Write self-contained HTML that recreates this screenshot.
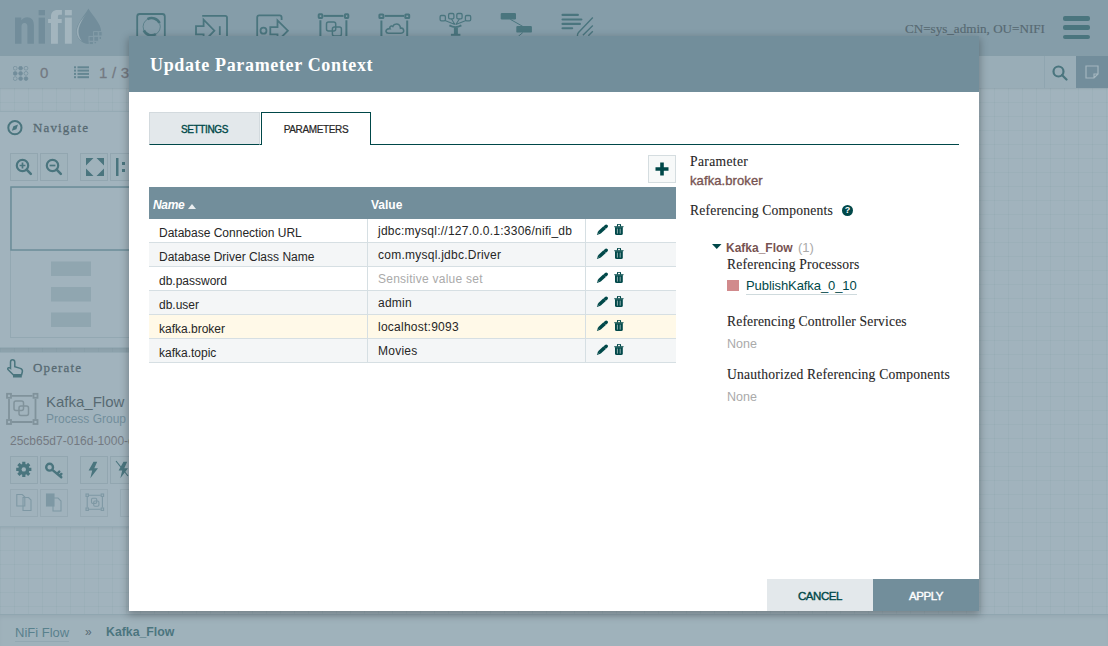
<!DOCTYPE html>
<html><head><meta charset="utf-8">
<style>
*{box-sizing:border-box;margin:0;padding:0}
html,body{width:1108px;height:646px;overflow:hidden;font-family:"Liberation Sans",sans-serif;position:relative;background:#f9fafb}
.abs{position:absolute}
#header{left:0;top:0;width:1108px;height:56px;background:#aabbc3}
#toolbar{left:0;top:56px;width:1108px;height:32px;background:#e3e8eb;box-shadow:0 1px 2px rgba(0,0,0,0.12)}
#canvas{left:0;top:88px;width:1108px;height:527px;
 background-color:#f9fafb;
 background-image:linear-gradient(to right, rgba(0,72,73,0.06) 1px, transparent 1px),linear-gradient(to bottom, rgba(0,72,73,0.06) 1px, transparent 1px);
 background-size:14px 14px;background-position:0 0}
#breadcrumbs{left:0;top:614px;width:1108px;height:32px;background:#f3f5f6;border-top:1px solid #c9d3d8;box-shadow:inset 0 3px 4px -1px rgba(0,0,0,0.10)}
.panel{background:#f9fafb;border:1px solid #d6dfe3;box-shadow:0 1px 3px rgba(0,0,0,0.15)}
.ptitle{font-family:"Liberation Serif",serif;font-size:13px;line-height:15px;color:#262626;letter-spacing:1.15px;-webkit-text-stroke:0.3px #262626}
.btn{width:28px;height:28px;border:1px solid #cfd3d6;background:#f4f6f7}
#glass{left:0;top:0;width:1108px;height:646px;background:#728e9b;opacity:0.65}
#dialog{left:129px;top:36px;width:850px;height:575px;background:#fff;box-shadow:0 3px 8px 1px rgba(0,0,0,0.28)}
#dlg-head{left:0;top:0;width:850px;height:56px;background:#728e9b}
#dlg-title{left:21px;top:19px;font-family:"Liberation Serif",serif;font-weight:bold;font-size:18px;letter-spacing:0.65px;line-height:20px;color:#fff;white-space:nowrap}
.tab{font:10px 'Liberation Sans',sans-serif;text-align:center;line-height:33px;letter-spacing:-0.35px}
.row{left:20px;width:527px;height:24px;border-bottom:1px solid #d6dfe3}
.cell{font:12px 'Liberation Sans',sans-serif;color:#262626;white-space:nowrap;letter-spacing:0px;line-height:15px}
.vcell{letter-spacing:0.25px}
.slab{font:13.6px 'Liberation Serif',serif;color:#262626;letter-spacing:0.2px;-webkit-text-stroke:0.1px #262626;white-space:nowrap;line-height:15px}
</style></head>
<body>
<div id="canvas" class="abs"></div>
<div id="header" class="abs">
  <!-- logo -->
  <svg class="abs" style="left:0;top:0" width="110" height="50" viewBox="0 0 110 50">
    <g fill="#728e9b">
      <path d="M15 43.7 V17.6 H21.3 V20.2 C22.8 18.3 24.8 17.3 27.2 17.3 C31.4 17.3 33.9 20 33.9 25.2 V43.7 H27.4 V26.6 C27.4 24.2 26.4 22.9 24.5 22.9 C22.5 22.9 21.5 24.2 21.5 26.6 V43.7 Z"/>
      <rect x="38.6" y="17.6" width="6.4" height="26.1"/><rect x="38.6" y="10" width="6.4" height="5.3"/>
      <path d="M88.4 8.4 C92.5 15.5 101.2 23.5 101.2 31.5 C101.2 38.5 95.5 43.9 88.7 43.9 C81.9 43.9 76.3 38.5 76.3 31.5 C76.3 23.5 84.5 15.5 88.4 8.4 Z"/>
    </g>
    <g fill="#fff">
      <path d="M51 43.7 V23 H48.1 V19 H51 V16.8 C51 12.2 53.4 10 57.6 10 H61.9 V14.8 H59.6 C58.4 14.8 57.9 15.4 57.9 16.9 V19 H61.7 V23 H57.9 V43.7 Z"/>
      <rect x="64.9" y="17.6" width="6.9" height="26.1"/><rect x="64.9" y="10" width="6.9" height="5.3"/>
    </g>
    <path d="M86 14.6 C80.2 21 76.3 27 76.8 33 C77.2 36.6 79 39.3 81.8 40.9 C79.9 38.6 78.7 35.8 78.5 32.6 C78.2 27.2 81.4 20.6 86 14.6 Z" fill="#fff" opacity="0.8"/>
    <g fill="#728e9b" stroke="#aabbc3" stroke-width="0.9">
      <rect x="93.6" y="31.6" width="4.6" height="4.4"/><rect x="98.7" y="31.6" width="3.4" height="4.4"/>
      <rect x="89" y="36.4" width="4.5" height="4.8"/><rect x="93.9" y="36.4" width="4.8" height="4.8"/><rect x="99.1" y="36.4" width="2.4" height="3"/>
      <rect x="89.2" y="41.6" width="4.2" height="2.8"/><rect x="94" y="41.6" width="2.6" height="2.2"/>
    </g>
  </svg>
  <!-- toolbar icons -->
  <svg class="abs" style="left:0;top:0" width="620" height="56" viewBox="0 0 620 56" fill="none" stroke="#004849" stroke-width="1.8">
    <!-- processor -->
    <rect x="137.2" y="14" width="27.6" height="40" rx="2.5"/>
    <circle cx="151.7" cy="26.7" r="8.6" stroke-width="0.7"/>
    <path d="M147.5 19.2 A8.6 8.6 0 0 1 159.6 23" stroke-width="2.6"/>
    <path d="M155.9 34.2 A8.6 8.6 0 0 1 143.8 30.4" stroke-width="2.6"/>
    <!-- input port -->
    <path d="M202.2 15.8 H225.2 a1.8 1.8 0 0 1 1.8 1.8 V40"/>
    <path d="M196 26.2 H203.6 V19.6 L214.4 30.7 L203.6 41.8 V34.3 H196 Z"/>
    <path d="M219.8 26.2 V35"/>
    <!-- output port -->
    <path d="M257.2 40 V17.4 a2 2 0 0 1 2 -2 H279.6 a2 2 0 0 1 2 2 V20"/>
    <circle cx="263.5" cy="30.7" r="3"/>
    <path d="M270.3 27.1 H277.5 V20.3 L287.9 30.7 L277.5 41.1 V34.3 H270.3 Z"/>
    <!-- process group -->
    <g stroke-width="2"><rect x="318.7" y="14.3" width="3.6" height="3.6" rx="0.6"/><rect x="344.9" y="14.3" width="3.4" height="3.6" rx="0.6"/><path d="M323.5 15.9 H343.5"/><path d="M320.4 20.3 V40 M346.4 20.3 V40"/></g>
    <g stroke-width="1.5"><rect x="326.5" y="21.9" width="9.2" height="9.2" rx="2"/><rect x="332.4" y="26.9" width="9" height="9" rx="2"/></g>
    <!-- remote pg -->
    <g stroke-width="2"><rect x="379.4" y="14.4" width="4" height="3.6" rx="0.6"/><rect x="405.3" y="14.4" width="3.9" height="3.6" rx="0.6"/><path d="M384.8 15.9 H404"/><path d="M381.4 20.4 V40 M407.2 20.4 V40"/></g>
    <path d="M388.5 33.2 H401 C403.3 33.2 404 31.5 403.6 30 C403.2 28.5 401.8 28 400.5 28.3 C400.5 25.5 398.5 23.8 396.2 24 C394.5 24.1 393.3 25.3 392.8 26.5 C392 25.8 390.6 25.9 390 27 C389.6 27.6 389.7 28.3 389.9 28.6 C387.5 28.5 385.8 30 386 31.5 C386.2 32.6 387.2 33.2 388.5 33.2 Z" stroke-width="1.6"/>
    <!-- funnel -->
    <g stroke-width="1.3"><rect x="440.1" y="15.5" width="5.3" height="5.3" rx="1.3"/><rect x="448.6" y="13.5" width="5.3" height="5.3" rx="1.3"/><rect x="456.8" y="13.5" width="5.3" height="5.3" rx="1.3"/><rect x="465.4" y="15.5" width="5.3" height="5.3" rx="1.3"/>
    <path d="M445 20.5 L454.9 24.5 M451.5 19 L454.9 24.5 M459.4 19 L455.8 24.5 M466 20.5 L455.8 24.5" stroke-width="1.1"/></g>
    <path d="M449.4 25.4 Q455.4 28.8 461.4 25.4" stroke-width="1.8"/>
    <path d="M455.9 27.5 V34" stroke-width="4"/>
    <path d="M450.9 34.8 H460.4" stroke-width="2"/>
    <!-- template -->
    <g fill="#004849" stroke="none"><rect x="500.7" y="12.9" width="15.3" height="6.5" rx="1.2"/><rect x="516.3" y="25.9" width="15.6" height="6.7" rx="1.2"/></g>
    <path d="M510.4 19.4 L522.8 26.4 M522.8 32.6 L518.3 36.3" stroke-width="1"/>
    <!-- label -->
    <g stroke-width="2.1" stroke-linecap="round"><path d="M562.5 14.9 H577.9 M562.5 19.5 H581.4 M562.5 23.9 H579.9 M562.5 28.3 H572.2"/></g>
    <path d="M592.8 17.4 L578.5 32.5 Q577.4 33.8 577.4 36 M592.8 25.4 L582.9 35.3 M592.8 31.3 L588.3 35.8" stroke-width="1.4"/>
  </svg>
  <div class="abs" style="left:905px;top:21px;font-family:'Liberation Serif',serif;font-size:13.1px;line-height:15px;color:#262626;white-space:nowrap;-webkit-text-stroke:0.2px #262626">CN=sys_admin, OU=NIFI</div>
  <div class="abs" style="left:1062.5px;top:16px;width:27.5px;height:4.7px;border-radius:2px;background:#004849"></div>
  <div class="abs" style="left:1062.5px;top:25.4px;width:27.5px;height:4.7px;border-radius:2px;background:#004849"></div>
  <div class="abs" style="left:1062.5px;top:34.8px;width:27.5px;height:4.7px;border-radius:2px;background:#004849"></div>
</div>
<div id="toolbar" class="abs">
  <svg class="abs" style="left:13px;top:9.5px" width="16" height="15" viewBox="0 0 16 15" fill="#728e9b" stroke="#728e9b" stroke-width="0.7">
    <circle cx="2.2" cy="2.2" r="1.9" fill="none"/><circle cx="7.6" cy="2.2" r="1.9"/><circle cx="13" cy="2.2" r="1.9" fill="none"/>
    <circle cx="2.2" cy="7.4" r="1.9"/><circle cx="7.6" cy="7.4" r="1.9"/><circle cx="13" cy="7.4" r="1.9" fill="none"/>
    <circle cx="2.2" cy="12.6" r="1.9" fill="none"/><circle cx="7.6" cy="12.6" r="1.9"/><circle cx="13" cy="12.6" r="1.9"/>
  </svg>
  <div class="abs" style="left:40px;top:8px;font-size:15px;line-height:17px;color:#775351;-webkit-text-stroke:0.3px #775351">0</div>
  <svg class="abs" style="left:74px;top:10px" width="15" height="13" viewBox="0 0 15 13" fill="#4a7a80">
    <rect x="0" y="0.3" width="2" height="2"/><rect x="3.5" y="0.3" width="11.5" height="2"/>
    <rect x="0" y="3.6" width="2" height="2"/><rect x="3.5" y="3.6" width="11.5" height="2"/>
    <rect x="0" y="6.9" width="2" height="2"/><rect x="3.5" y="6.9" width="11.5" height="2"/>
    <rect x="0" y="10.2" width="2" height="2"/><rect x="3.5" y="10.2" width="11.5" height="2"/>
  </svg>
  <div class="abs" style="left:99px;top:8px;font-size:15px;line-height:17px;color:#775351;white-space:nowrap;letter-spacing:0.2px;-webkit-text-stroke:0.3px #775351">1 / 3</div>
  <div class="abs" style="left:1044px;top:0;width:32px;height:32px;border-left:1px solid #c7d2d7"></div>
  <svg class="abs" style="left:1052px;top:9px" width="16" height="16" viewBox="0 0 16 16" fill="none" stroke="#004849" stroke-width="2.2"><circle cx="6.5" cy="6.5" r="5"/><path d="M10 10 l4.5 4.5" stroke-linecap="round"/></svg>
  <div class="abs" style="left:1076px;top:0;width:32px;height:32px;background:#728e9b"></div>
  <svg class="abs" style="left:1085px;top:9px" width="14" height="14" viewBox="0 0 14 14" fill="none" stroke="#fff" stroke-width="1.2"><path d="M1 1 h12 v8 l-4 4 h-8 z M13 9 h-4 v4"/></svg>
</div>

<!-- navigate panel -->
<div class="abs panel" style="left:-1px;top:111px;width:240px;height:237px"></div>
<div class="abs" style="left:0;top:348px;width:240px;height:3.5px;background:rgba(0,40,50,0.2)"></div>
<div class="abs panel" style="left:-1px;top:351.5px;width:240px;height:175px"></div>
<svg class="abs" style="left:0;top:0" width="240" height="530" viewBox="0 0 240 530">
  <!-- navigate icon -->
  <circle cx="14.9" cy="127.7" r="6.6" fill="none" stroke="#004849" stroke-width="2"/><path d="M18 124.6 L16.4 129.2 L11.8 130.8 L13.4 126.2 Z" fill="#004849"/>
  <!-- zoom buttons -->
  <g fill="#f4f6f7" stroke="#cfd3d6" stroke-width="1"><rect x="10.5" y="153.5" width="27" height="27"/><rect x="40.5" y="153.5" width="27" height="27"/><rect x="80.5" y="153.5" width="27" height="27"/><rect x="110.5" y="153.5" width="27" height="27"/></g>
  <g fill="none" stroke="#004849" stroke-width="2.2">
    <circle cx="22.5" cy="165.5" r="5.7"/><path d="M26.6 169.6 l4.2 4.2" stroke-linecap="round" stroke-width="2.6"/><path d="M19.6 165.5 h5.8 M22.5 162.6 v5.8" stroke-width="1.7"/>
    <circle cx="52.5" cy="165.5" r="5.7"/><path d="M56.6 169.6 l4.2 4.2" stroke-linecap="round" stroke-width="2.6"/><path d="M49.6 165.5 h5.8" stroke-width="1.7"/>
  </g>
  <g fill="#004849"><path d="M86 158 h7.5 l-7.5 7.5z M104 158 h-7.5 l7.5 7.5z M86 176 h7.5 l-7.5 -7.5z M104 176 h-7.5 l7.5 -7.5z"/><rect x="116" y="158" width="2.5" height="18"/><rect x="122" y="162" width="3" height="3"/><rect x="122" y="169" width="3" height="3"/></g>
  <!-- birdseye -->
  <rect x="10.5" y="187.5" width="240" height="150" fill="none" stroke="#d2dadd" stroke-width="1"/>
  <rect x="11" y="187" width="240" height="63" fill="none" stroke="#5f8a94" stroke-width="1.5"/>
  <g fill="#8fa5af" opacity="0.45"><rect x="51" y="261.5" width="40" height="14.5"/><rect x="51" y="287" width="40" height="14.5"/><rect x="51" y="312.5" width="40" height="14.5"/></g>
  <!-- operate icon (hand) -->
  <path d="M12.5 359.8 C14 359.8 14.8 360.8 14.8 362.2 V366.6 L20.3 368.4 C21.8 368.9 22.6 370 22.4 371.5 L21.6 374.8 H13.2 L8.2 369.8 C7.4 369 7.6 368 8.6 367.7 C9.3 367.5 10 367.8 10.5 368.3 V362.2 C10.5 360.8 11.2 359.8 12.5 359.8 Z" fill="none" stroke="#004849" stroke-width="1.5"/>
  <rect x="13" y="374.5" width="8.8" height="3" fill="#004849"/>
  <!-- process group icon -->
  <g fill="none" stroke="#9a9a9a" stroke-width="1.8">
    <rect x="7" y="393.8" width="4" height="4"/><rect x="33.5" y="393.8" width="4" height="4"/><rect x="7" y="420" width="4" height="4"/><rect x="33.5" y="420" width="4" height="4"/>
    <path d="M12 395.8 h20.5 M12 422 h20.5 M9 399 v20 M35.5 399 v20"/>
    <rect x="14" y="401" width="9.5" height="9.5" rx="2" stroke-width="1.5"/><rect x="19" y="406" width="9.5" height="9.5" rx="2" stroke-width="1.5"/>
  </g>
  <!-- operate buttons -->
  <g fill="#f4f6f7" stroke="#cfd3d6" stroke-width="1"><rect x="10.5" y="456.5" width="27" height="27"/><rect x="40.5" y="456.5" width="27" height="27"/><rect x="80.5" y="456.5" width="27" height="27"/><rect x="110.5" y="456.5" width="27" height="27"/></g>
  <g fill="#f4f6f7" stroke="#cfd3d6" stroke-width="1" opacity="0.75"><rect x="10.5" y="489.5" width="27" height="27"/><rect x="40.5" y="489.5" width="27" height="27"/><rect x="80.5" y="489.5" width="27" height="27"/><rect x="120.5" y="489.5" width="27" height="27"/></g>
  <!-- gear -->
  <g fill="#004849" transform="translate(23.8 469.4)">
    <circle r="5.6"/>
    <g stroke="#004849" stroke-width="3.2"><path d="M0 -7.6 V7.6 M-7.6 0 H7.6 M-5.4 -5.4 L5.4 5.4 M5.4 -5.4 L-5.4 5.4"/></g>
    <circle r="2.2" fill="#f4f6f7"/>
  </g>
  <!-- key -->
  <g fill="none" stroke="#004849" stroke-width="2.4"><circle cx="49.6" cy="467.2" r="3.4"/><path d="M52.3 469.9 L61.3 477.3 M57.2 473.9 L59.3 471.6 M59.6 475.9 L61.4 473.9" stroke-linecap="round"/></g>
  <!-- bolt -->
  <path d="M93.5 461.7 L88.6 470.5 H92.2 L90.3 478.2 L98 468.2 H94.3 L97.2 461.7 Z" fill="#004849"/>
  <path d="M123.5 461.7 L118.6 470.5 H122.2 L120.3 478.2 L128 468.2 H124.3 L127.2 461.7 Z" fill="#004849"/>
  <path d="M116 461 L128 476" stroke="#004849" stroke-width="1.2"/>
  <!-- row2 faded icons -->
  <g fill="none" stroke="#7f9aa5" stroke-width="1.1" opacity="0.8">
    <path d="M16.8 494.5 h5.5 l2.5 2.5 v9 h-8z"/><path d="M23 497.5 h5.5 l2.5 2.5 v10.5 h-8z"/>
    <rect x="46.5" y="494" width="7.5" height="12" fill="#7f9aa5"/><path d="M53 498 h5 l3 3 v10 h-8z"/>
    <rect x="86" y="494" width="2.4" height="2.4"/><rect x="101.2" y="494" width="2.4" height="2.4"/><rect x="86" y="508" width="2.4" height="2.4"/><rect x="101.2" y="508" width="2.4" height="2.4"/><path d="M88.8 495.2 H100.8 M88.8 509.2 H100.8 M87.2 496.8 V507.6 M102.4 496.8 V507.6"/><rect x="91.5" y="498.2" width="5.2" height="5.2" rx="1.2"/><rect x="93.7" y="501" width="5.2" height="5.2" rx="1.2"/>
  </g>
</svg>
<div class="abs ptitle" style="left:33px;top:120px">Navigate</div>
<div class="abs ptitle" style="left:33px;top:360px">Operate</div>
<div class="abs" style="left:46px;top:393px;font-size:15px;line-height:17px;color:#262626;white-space:nowrap">Kafka_Flow</div>
<div class="abs" style="left:46px;top:412px;font-size:12px;line-height:14px;color:#728e9b;white-space:nowrap">Process Group</div>
<div class="abs" style="left:10px;top:434px;font-size:12px;line-height:14px;color:#775351;white-space:nowrap">25cb65d7-016d-1000-c</div>
<div id="breadcrumbs" class="abs">
  <div class="abs" style="left:15px;top:9px;font-size:13px;color:#2a6a72;white-space:nowrap;border-bottom:1px solid #d0dadd;line-height:17px">NiFi Flow</div>
  <div class="abs" style="left:85px;top:9px;font-size:12px;color:#262626;line-height:17px">»</div>
  <div class="abs" style="left:106px;top:9px;font-size:12.3px;font-weight:bold;color:#004849;white-space:nowrap;line-height:17px">Kafka_Flow</div>
</div>
<div id="glass" class="abs"></div>
<div id="dialog" class="abs">
  <div id="dlg-head" class="abs"><div id="dlg-title" class="abs">Update Parameter Context</div></div>
  <!-- tabs -->
  <div class="abs" style="left:20px;top:108px;width:810px;height:1px;background:#004849"></div>
  <div class="abs tab" style="left:20px;top:76px;width:111px;height:33px;background:#e3e8eb;border:1px solid #d3dade;border-bottom:1px solid #004849;color:#004849;-webkit-text-stroke:0.35px #004849">SETTINGS</div>
  <div class="abs tab" style="left:132px;top:76px;width:110px;height:33px;background:#fff;border:1px solid #004849;border-bottom:none;color:#262626;-webkit-text-stroke:0.2px #262626">PARAMETERS</div>
  <!-- add button -->
  <div class="abs" style="left:519px;top:119px;width:28px;height:28px;background:#f7f9f9;border:1px solid #d5dde0"></div>
  <svg class="abs" style="left:526px;top:126px" width="14" height="14" viewBox="0 0 14 14"><path d="M7 0.5 v13 M0.5 7 h13" stroke="#004849" stroke-width="3.6"/></svg>
  <!-- table -->
  <div class="abs" style="left:20px;top:151px;width:527px;height:32px;background:#728e9b"></div>
  <div class="abs" style="left:24px;top:162px;font:italic bold 12px 'Liberation Sans',sans-serif;color:#fff;letter-spacing:-0.3px">Name</div>
  <svg class="abs" style="left:59px;top:168px" width="8" height="5" viewBox="0 0 8 5"><path d="M0 5 L4 0 L8 5z" fill="#fff" opacity="0.85"/></svg>
  <div class="abs" style="left:242px;top:162px;font:bold 12px 'Liberation Sans',sans-serif;color:#fff">Value</div>
  <div class="abs row" style="top:183px;background:#fff"><div class="abs cell" style="left:10px;top:7px">Database Connection URL</div><div class="abs" style="left:218px;top:0;width:1px;height:24px;background:#d6dfe3"></div><div class="abs cell vcell" style="left:229px;top:5px;">jdbc:mysql://127.0.0.1:3306/nifi_db</div><div class="abs" style="left:436px;top:0;width:1px;height:24px;background:#d6dfe3"></div><svg class="abs" style="left:447px;top:5px" width="30" height="12" viewBox="0 0 30 12"><path d="M3.3 8.5 L8.6 3.7" stroke="#004849" stroke-width="3.6"/><path d="M9.7 2.8 L10.2 2.3" stroke="#004849" stroke-width="3.4" stroke-linecap="round"/><path d="M0.9 10.9 L2.15 7.1 L4.55 9.75 Z" fill="#004849"/><path d="M1.6 10.1 L2 9 L2.8 9.8 Z" fill="#fff" opacity="0.6"/><path d="M21.5 2.4 V1.1 Q21.5 0.3 22.3 0.3 H23.7 Q24.5 0.3 24.5 1.1 V2.4" stroke="#004849" stroke-width="1.1" fill="none"/><path d="M18 2.3 H27.8 L27 3.4 H18.8 Z" fill="#004849"/><path d="M19 3.3 H26.8 V9.4 Q26.8 10.9 25.3 10.9 H20.5 Q19 10.9 19 9.4 Z" fill="#004849"/><rect x="20.9" y="4.6" width="1" height="5" fill="#fff" opacity="0.55"/><rect x="23.7" y="4.6" width="1" height="5" fill="#fff" opacity="0.55"/></svg></div>
<div class="abs row" style="top:207px;background:#f4f6f7"><div class="abs cell" style="left:10px;top:7px">Database Driver Class Name</div><div class="abs" style="left:218px;top:0;width:1px;height:24px;background:#d6dfe3"></div><div class="abs cell vcell" style="left:229px;top:5px;">com.mysql.jdbc.Driver</div><div class="abs" style="left:436px;top:0;width:1px;height:24px;background:#d6dfe3"></div><svg class="abs" style="left:447px;top:5px" width="30" height="12" viewBox="0 0 30 12"><path d="M3.3 8.5 L8.6 3.7" stroke="#004849" stroke-width="3.6"/><path d="M9.7 2.8 L10.2 2.3" stroke="#004849" stroke-width="3.4" stroke-linecap="round"/><path d="M0.9 10.9 L2.15 7.1 L4.55 9.75 Z" fill="#004849"/><path d="M1.6 10.1 L2 9 L2.8 9.8 Z" fill="#fff" opacity="0.6"/><path d="M21.5 2.4 V1.1 Q21.5 0.3 22.3 0.3 H23.7 Q24.5 0.3 24.5 1.1 V2.4" stroke="#004849" stroke-width="1.1" fill="none"/><path d="M18 2.3 H27.8 L27 3.4 H18.8 Z" fill="#004849"/><path d="M19 3.3 H26.8 V9.4 Q26.8 10.9 25.3 10.9 H20.5 Q19 10.9 19 9.4 Z" fill="#004849"/><rect x="20.9" y="4.6" width="1" height="5" fill="#fff" opacity="0.55"/><rect x="23.7" y="4.6" width="1" height="5" fill="#fff" opacity="0.55"/></svg></div>
<div class="abs row" style="top:231px;background:#fff"><div class="abs cell" style="left:10px;top:7px">db.password</div><div class="abs" style="left:218px;top:0;width:1px;height:24px;background:#d6dfe3"></div><div class="abs cell vcell" style="left:229px;top:5px;color:#aaa">Sensitive value set</div><div class="abs" style="left:436px;top:0;width:1px;height:24px;background:#d6dfe3"></div><svg class="abs" style="left:447px;top:5px" width="30" height="12" viewBox="0 0 30 12"><path d="M3.3 8.5 L8.6 3.7" stroke="#004849" stroke-width="3.6"/><path d="M9.7 2.8 L10.2 2.3" stroke="#004849" stroke-width="3.4" stroke-linecap="round"/><path d="M0.9 10.9 L2.15 7.1 L4.55 9.75 Z" fill="#004849"/><path d="M1.6 10.1 L2 9 L2.8 9.8 Z" fill="#fff" opacity="0.6"/><path d="M21.5 2.4 V1.1 Q21.5 0.3 22.3 0.3 H23.7 Q24.5 0.3 24.5 1.1 V2.4" stroke="#004849" stroke-width="1.1" fill="none"/><path d="M18 2.3 H27.8 L27 3.4 H18.8 Z" fill="#004849"/><path d="M19 3.3 H26.8 V9.4 Q26.8 10.9 25.3 10.9 H20.5 Q19 10.9 19 9.4 Z" fill="#004849"/><rect x="20.9" y="4.6" width="1" height="5" fill="#fff" opacity="0.55"/><rect x="23.7" y="4.6" width="1" height="5" fill="#fff" opacity="0.55"/></svg></div>
<div class="abs row" style="top:255px;background:#f4f6f7"><div class="abs cell" style="left:10px;top:7px">db.user</div><div class="abs" style="left:218px;top:0;width:1px;height:24px;background:#d6dfe3"></div><div class="abs cell vcell" style="left:229px;top:5px;">admin</div><div class="abs" style="left:436px;top:0;width:1px;height:24px;background:#d6dfe3"></div><svg class="abs" style="left:447px;top:5px" width="30" height="12" viewBox="0 0 30 12"><path d="M3.3 8.5 L8.6 3.7" stroke="#004849" stroke-width="3.6"/><path d="M9.7 2.8 L10.2 2.3" stroke="#004849" stroke-width="3.4" stroke-linecap="round"/><path d="M0.9 10.9 L2.15 7.1 L4.55 9.75 Z" fill="#004849"/><path d="M1.6 10.1 L2 9 L2.8 9.8 Z" fill="#fff" opacity="0.6"/><path d="M21.5 2.4 V1.1 Q21.5 0.3 22.3 0.3 H23.7 Q24.5 0.3 24.5 1.1 V2.4" stroke="#004849" stroke-width="1.1" fill="none"/><path d="M18 2.3 H27.8 L27 3.4 H18.8 Z" fill="#004849"/><path d="M19 3.3 H26.8 V9.4 Q26.8 10.9 25.3 10.9 H20.5 Q19 10.9 19 9.4 Z" fill="#004849"/><rect x="20.9" y="4.6" width="1" height="5" fill="#fff" opacity="0.55"/><rect x="23.7" y="4.6" width="1" height="5" fill="#fff" opacity="0.55"/></svg></div>
<div class="abs row" style="top:279px;background:#fff9e8"><div class="abs cell" style="left:10px;top:7px">kafka.broker</div><div class="abs" style="left:218px;top:0;width:1px;height:24px;background:#d6dfe3"></div><div class="abs cell vcell" style="left:229px;top:5px;">localhost:9093</div><div class="abs" style="left:436px;top:0;width:1px;height:24px;background:#d6dfe3"></div><svg class="abs" style="left:447px;top:5px" width="30" height="12" viewBox="0 0 30 12"><path d="M3.3 8.5 L8.6 3.7" stroke="#004849" stroke-width="3.6"/><path d="M9.7 2.8 L10.2 2.3" stroke="#004849" stroke-width="3.4" stroke-linecap="round"/><path d="M0.9 10.9 L2.15 7.1 L4.55 9.75 Z" fill="#004849"/><path d="M1.6 10.1 L2 9 L2.8 9.8 Z" fill="#fff" opacity="0.6"/><path d="M21.5 2.4 V1.1 Q21.5 0.3 22.3 0.3 H23.7 Q24.5 0.3 24.5 1.1 V2.4" stroke="#004849" stroke-width="1.1" fill="none"/><path d="M18 2.3 H27.8 L27 3.4 H18.8 Z" fill="#004849"/><path d="M19 3.3 H26.8 V9.4 Q26.8 10.9 25.3 10.9 H20.5 Q19 10.9 19 9.4 Z" fill="#004849"/><rect x="20.9" y="4.6" width="1" height="5" fill="#fff" opacity="0.55"/><rect x="23.7" y="4.6" width="1" height="5" fill="#fff" opacity="0.55"/></svg></div>
<div class="abs row" style="top:303px;background:#f4f6f7"><div class="abs cell" style="left:10px;top:7px">kafka.topic</div><div class="abs" style="left:218px;top:0;width:1px;height:24px;background:#d6dfe3"></div><div class="abs cell vcell" style="left:229px;top:5px;">Movies</div><div class="abs" style="left:436px;top:0;width:1px;height:24px;background:#d6dfe3"></div><svg class="abs" style="left:447px;top:5px" width="30" height="12" viewBox="0 0 30 12"><path d="M3.3 8.5 L8.6 3.7" stroke="#004849" stroke-width="3.6"/><path d="M9.7 2.8 L10.2 2.3" stroke="#004849" stroke-width="3.4" stroke-linecap="round"/><path d="M0.9 10.9 L2.15 7.1 L4.55 9.75 Z" fill="#004849"/><path d="M1.6 10.1 L2 9 L2.8 9.8 Z" fill="#fff" opacity="0.6"/><path d="M21.5 2.4 V1.1 Q21.5 0.3 22.3 0.3 H23.7 Q24.5 0.3 24.5 1.1 V2.4" stroke="#004849" stroke-width="1.1" fill="none"/><path d="M18 2.3 H27.8 L27 3.4 H18.8 Z" fill="#004849"/><path d="M19 3.3 H26.8 V9.4 Q26.8 10.9 25.3 10.9 H20.5 Q19 10.9 19 9.4 Z" fill="#004849"/><rect x="20.9" y="4.6" width="1" height="5" fill="#fff" opacity="0.55"/><rect x="23.7" y="4.6" width="1" height="5" fill="#fff" opacity="0.55"/></svg></div>

  <!-- right panel -->
  <div class="abs slab" style="left:561px;top:118px;letter-spacing:0.35px">Parameter</div>
  <div class="abs" style="left:561px;top:137px;font:13px 'Liberation Sans',sans-serif;color:#775351;-webkit-text-stroke:0.35px #775351;letter-spacing:0.1px">kafka.broker</div>
  <div class="abs slab" style="left:561px;top:167px">Referencing Components</div>
  <div class="abs" style="left:713px;top:169.3px;width:11px;height:11px;border-radius:50%;background:#004849;color:#fff;font:bold 9px 'Liberation Sans',sans-serif;text-align:center;line-height:11px">?</div>
  <svg class="abs" style="left:583px;top:208px" width="10" height="6" viewBox="0 0 10 6"><path d="M0 0 h9.5 L4.75 5z" fill="#004849"/></svg>
  <div class="abs" style="left:597px;top:204px;font:bold 12px 'Liberation Sans',sans-serif;color:#775351;white-space:nowrap">Kafka_Flow <span style="font-weight:normal;color:#aaa;margin-left:2px;font-size:13px">(1)</span></div>
  <div class="abs slab" style="left:598px;top:221px">Referencing Processors</div>
  <div class="abs" style="left:598px;top:244px;width:12px;height:11px;background:#d18a8c"></div>
  <div class="abs" style="left:617px;top:241px;font:13px 'Liberation Sans',sans-serif;color:#004849;white-space:nowrap;border-bottom:1px solid #cfdadd;line-height:17px;letter-spacing:-0.08px">PublishKafka_0_10</div>
  <div class="abs slab" style="left:598px;top:278px;letter-spacing:0.15px">Referencing Controller Services</div>
  <div class="abs" style="left:598px;top:301px;font:12.5px 'Liberation Sans',sans-serif;color:#aaa">None</div>
  <div class="abs slab" style="left:598px;top:331px">Unauthorized Referencing Components</div>
  <div class="abs" style="left:598px;top:354px;font:12.5px 'Liberation Sans',sans-serif;color:#aaa">None</div>
  <!-- buttons -->
  <div class="abs" style="left:638px;top:543px;width:106px;height:32px;background:#e3e8eb;color:#004849;font:11.5px 'Liberation Sans',sans-serif;text-align:center;line-height:34px;letter-spacing:-0.45px;-webkit-text-stroke:0.4px #004849">CANCEL</div>
  <div class="abs" style="left:744px;top:543px;width:106px;height:32px;background:#728e9b;color:#fff;font:11.5px 'Liberation Sans',sans-serif;text-align:center;line-height:34px;letter-spacing:-0.45px;-webkit-text-stroke:0.4px #fff">APPLY</div>
</div>
</body></html>
